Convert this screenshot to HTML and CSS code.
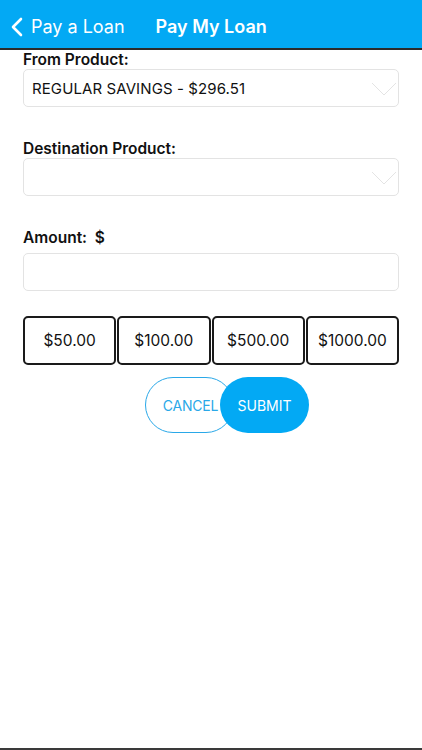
FILE: index.html
```html
<!DOCTYPE html>
<html>
<head>
<meta charset="utf-8">
<link rel="stylesheet" href="styles.css">
</head>
<body>
<div class="screen">
  <header class="navbar">
    <a class="back">
      <svg class="back-icon" width="14" height="20" viewBox="0 0 14 20"><path d="M11 2 L3 10 L11 18" fill="none" stroke="#fff" stroke-width="2.6" stroke-linecap="round" stroke-linejoin="round"/></svg>
      <span>Pay a Loan</span>
    </a>
    <h1 class="title">Pay My Loan</h1>
  </header>
  <main class="content">
    <div class="field">
      <label class="label">From Product:</label>
      <div class="select">
        <span class="select-value">REGULAR SAVINGS - $296.51</span>
        <svg class="caret" width="26" height="15" viewBox="0 0 26 15"><path d="M1 1 L13 13 L25 1" fill="none" stroke="#e4e4e4" stroke-width="1"/></svg>
      </div>
    </div>
    <div class="field">
      <label class="label">Destination Product:</label>
      <div class="select">
        <span class="select-value"></span>
        <svg class="caret" width="26" height="15" viewBox="0 0 26 15"><path d="M1 1 L13 13 L25 1" fill="none" stroke="#e4e4e4" stroke-width="1"/></svg>
      </div>
    </div>
    <div class="field field-amount">
      <label class="label">Amount:&nbsp; $</label>
      <div class="input"></div>
    </div>
    <div class="quick">
      <button class="quick-btn">$50.00</button>
      <button class="quick-btn">$100.00</button>
      <button class="quick-btn">$500.00</button>
      <button class="quick-btn">$1000.00</button>
    </div>
    <div class="actions">
      <button class="btn btn-cancel">CANCEL</button>
      <button class="btn btn-submit">SUBMIT</button>
    </div>
  </main>
</div>
</body>
</html>
```
FILE: styles.css
```css
* { box-sizing: border-box; }
html, body { margin: 0; padding: 0; background: #fff; }
body { font-family: Inter, "Noto Sans", "Liberation Sans", sans-serif; color: #111; }
.screen {
  width: 422px;
  height: 750px;
  display: flex;
  flex-direction: column;
  border-bottom: 2px solid #3a3a3a;
}
.navbar {
  height: 50px;
  background: #03a9f4;
  border-bottom: 2px solid #2b2b2b;
  display: flex;
  align-items: center;
  padding: 4px 0 0 10px;
  color: #fff;
}
.back {
  display: flex;
  align-items: center;
  gap: 7px;
  font-size: 18px;
  font-weight: 400;
}
.back-icon { margin-top: 1px; }
.title {
  margin: 0 0 0 31px;
  font-size: 18px;
  font-weight: 600;
}
.content {
  flex: 1;
  padding: 1px 23px 0 23px;
  display: flex;
  flex-direction: column;
}
.field { display: flex; flex-direction: column; margin-bottom: 33px; }
.label {
  font-size: 15.5px;
  font-weight: 600;
  line-height: 18px;
  margin-bottom: 0;
}
.select, .input {
  height: 38px;
  border: 1px solid #e3e3e3;
  border-radius: 5px;
  display: flex;
  align-items: center;
  justify-content: space-between;
  padding: 0 1px 0 8px;
}
.select-value { font-size: 15px; letter-spacing: 0.1px; }
.caret { margin-top: 2px; }
.field-amount { margin-bottom: 25px; }
.field-amount .label { margin-bottom: 6px; }
.quick {
  display: flex;
  gap: 1px;
  height: 49px;
}
.quick-btn {
  flex: 1;
  border: 2px solid #1a1a1a;
  border-radius: 5px;
  background: #fff;
  font-family: inherit;
  font-size: 15.5px;
  color: #111;
  padding: 0;
}
.actions {
  display: flex;
  justify-content: center;
  margin-top: 12px;
  padding-left: 32px;
}
.btn {
  width: 89px;
  height: 56px;
  border-radius: 28px;
  font-family: inherit;
  font-size: 14px;
  padding: 0;
}
.btn-cancel {
  background: #fff;
  border: 1px solid #2aa8e8;
  color: #2aa8e8;
  padding-left: 2px;
  letter-spacing: -0.2px;
}
.btn-submit {
  background: #03a9f4;
  border: none;
  color: #fff;
  margin-left: -14px;
}
```
